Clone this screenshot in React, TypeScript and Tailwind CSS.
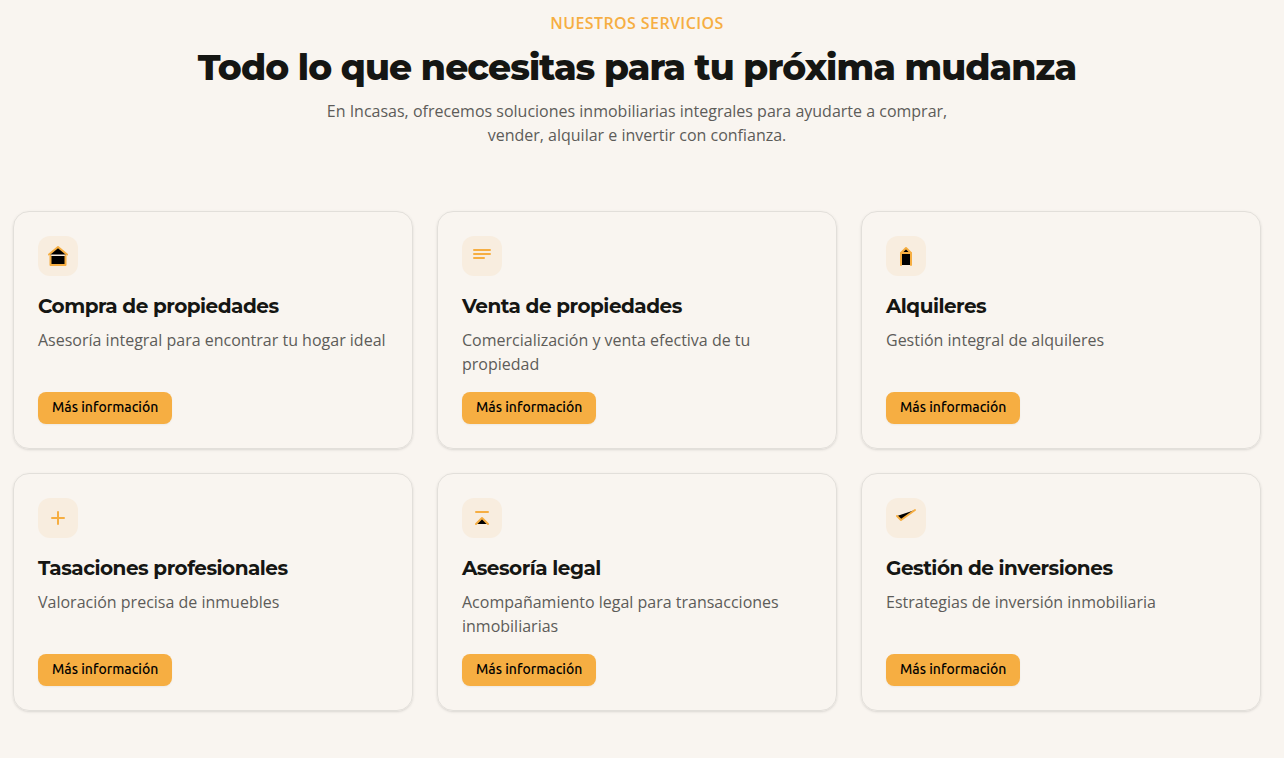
import type { ReactNode } from 'react';

type Service = { title: string; description: string; icon: ReactNode };

const services: Service[] = [
  {
    title: 'Compra de propiedades',
    description: 'Asesoría integral para encontrar tu hogar ideal',
    icon: (
      <>
        <path d="M3 10.5 12 3l9 7.5" />
        <path d="M4.5 12v9h15v-9" />
      </>
    ),
  },
  {
    title: 'Venta de propiedades',
    description: 'Comercialización y venta efectiva de tu propiedad',
    icon: <path d="M4 6h16M4 10h16M4 14h10" />,
  },
  {
    title: 'Alquileres',
    description: 'Gestión integral de alquileres',
    icon: (
      <>
        <path d="M7 9l5-5 5 5" />
        <path d="M7 21V9h10v12" />
      </>
    ),
  },
  {
    title: 'Tasaciones profesionales',
    description: 'Valoración precisa de inmuebles',
    icon: <path d="M12 6v12M6 12h12" />,
  },
  {
    title: 'Asesoría legal',
    description: 'Acompañamiento legal para transacciones inmobiliarias',
    icon: (
      <>
        <path d="M6 6h12" />
        <path d="M6 18l6-6 6 6" />
      </>
    ),
  },
  {
    title: 'Gestión de inversiones',
    description: 'Estrategias de inversión inmobiliaria',
    icon: <path d="M3 10l4 4L21 4" />,
  },
];

function ServiceCard({ title, description, icon }: Service) {
  return (
    <article className="flex flex-col items-start rounded-2xl border border-[#e2dfda] p-6 shadow-sm">
      <div className="flex size-10 items-center justify-center rounded-xl bg-[#f8eddf]">
        <svg
          viewBox="0 0 24 24"
          className="size-6 fill-black stroke-[#f6ae42] stroke-2"
          strokeLinecap="round"
          strokeLinejoin="round"
          aria-hidden="true"
        >
          {icon}
        </svg>
      </div>
      <h3 className="mt-4 font-[Montserrat,Inter,sans-serif] text-xl font-bold tracking-tight">{title}</h3>
      <p className="mt-2 mb-4 min-h-12 text-base text-[#5d5c59]">{description}</p>
      <button
        type="button"
        className="mt-auto flex h-8 items-center rounded-lg bg-[#f6ae42] px-3.5 pb-0.5 font-[Ubuntu,'Open_Sans',sans-serif] text-sm font-medium text-black shadow-xs"
      >
        Más información
      </button>
    </article>
  );
}

export default function App() {
  return (
    <main className="min-h-screen bg-[#f9f5f0] pt-[11px] pr-[23px] pb-12 pl-[13px] font-['Open_Sans',sans-serif] text-[#151613]">
      <header className="flex flex-col items-center text-center">
        <p className="text-base leading-6 font-semibold tracking-wide text-[#f6ae42] uppercase">Nuestros servicios</p>
        <h2 className="mt-2 font-[Montserrat,Inter,sans-serif] text-4xl leading-12 font-extrabold tracking-tight">
          Todo lo que necesitas para tu próxima mudanza
        </h2>
        <p className="mt-2 max-w-2xl text-base text-[#5d5c59]">
          En Incasas, ofrecemos soluciones inmobiliarias integrales para ayudarte a comprar, vender, alquilar e
          invertir con confianza.
        </p>
      </header>
      <section aria-label="Servicios" className="mt-16 grid gap-6 md:grid-cols-2 lg:grid-cols-3">
        {services.map((service) => (
          <ServiceCard key={service.title} {...service} />
        ))}
      </section>
    </main>
  );
}
